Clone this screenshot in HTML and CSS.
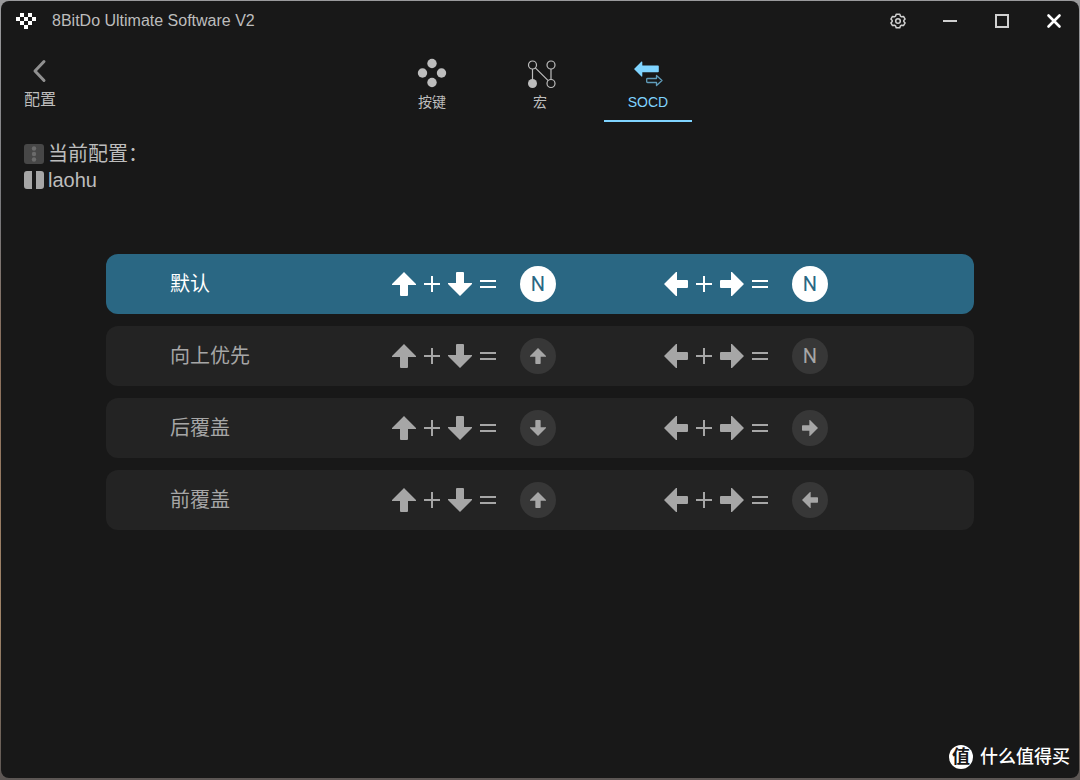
FILE: index.html
```html
<!DOCTYPE html>
<html lang="zh-CN">
<head>
<meta charset="utf-8">
<meta name="viewport" content="width=device-width, initial-scale=1">
<title>8BitDo Ultimate Software V2</title>
<link rel="stylesheet" href="styles.css">
</head>
<body>
<svg class="symbols" aria-hidden="true">
  <symbol id="arrow" viewBox="0 0 24 24"><path d="M12 0 24 12v1h-8v10q0 1-1 1H9q-1 0-1-1V13H0v-1z"/></symbol>
  <symbol id="plus" viewBox="0 0 16 16"><path d="M7 0h2v16H7zM0 7h16v2H0z"/></symbol>
  <symbol id="equals" viewBox="0 0 16 16"><path d="M0 4h16v2H0zM0 10h16v2H0z"/></symbol>
</svg>
<div class="window">
  <header class="titlebar">
    <svg class="logo" viewBox="0 0 20 16" shape-rendering="crispEdges" aria-hidden="true"><path d="M4 0h4v4H4zM12 0h4v4h-4zM0 4h4v4H0zM8 4h4v4H8zM16 4h4v4h-4zM4 8h4v4H4zM12 8h4v4h-4zM8 12h4v4H8z"/></svg>
    <h1 class="title">8BitDo Ultimate Software V2</h1>
    <div class="controls">
      <button type="button" class="control" aria-label="设置"><svg viewBox="0 0 16 16"><path class="line" d="M6.200 1.200h3.600l.6 1.900 1.200.7 1.900-.4 1.600 2.700-1.300 1.400v1l1.300 1.400-1.600 2.700-1.900-.4-1.200.7-.6 1.900H6.200l-.6-1.900-1.200-.7-1.900.4L.9 9.900l1.300-1.400v-1L.9 6.100l1.600-2.700 1.900.4 1.200-.7z"/><circle class="line" cx="8" cy="8" r="2.300"/></svg></button>
      <button type="button" class="control" aria-label="最小化"><svg viewBox="0 0 16 16"><path d="M1 7h14v2H1z"/></svg></button>
      <button type="button" class="control" aria-label="最大化"><svg viewBox="0 0 16 16"><path class="line thick" d="M2 2h12v12H2z"/></svg></button>
      <button type="button" class="control close" aria-label="关闭"><svg viewBox="0 0 16 16"><path class="line heavy" d="m2.500 2.500 11 11m0-11-11 11"/></svg></button>
    </div>
  </header>

  <div class="toolbar">
    <button type="button" class="back">
      <svg viewBox="0 0 24 24" aria-hidden="true"><path d="m16 2.500-9 9.500 9 9.500"/></svg>
      <span>配置</span>
    </button>
    <nav class="tabs">
      <a class="tab" href="#buttons">
        <svg viewBox="0 0 32 32" aria-hidden="true"><g fill="currentColor"><circle cx="16" cy="6.500" r="4.700"/><circle cx="6.500" cy="16" r="4.700"/><circle cx="25.500" cy="16" r="4.700"/><circle cx="16" cy="25.500" r="4.700"/></g></svg>
        <span>按键</span>
      </a>
      <a class="tab" href="#macro">
        <svg viewBox="0 0 32 32" aria-hidden="true"><g fill="none" stroke="currentColor" stroke-width="1.200"><circle cx="8.500" cy="8" r="4"/><circle cx="27" cy="8" r="4"/><circle cx="27" cy="26.500" r="4"/><path d="M8.500 12v11M27 12v10.500M11.300 10.800l12.900 12.900"/></g><circle cx="8.500" cy="26.500" r="4.500" fill="currentColor"/></svg>
        <span>宏</span>
      </a>
      <a class="tab active" href="#socd" aria-current="page">
        <svg viewBox="0 0 32 32" aria-hidden="true"><path fill="currentColor" d="M2 12 9.500 4.500q.8-.4.800.6V8.500H26q.8 0 .8.800v5.200q0 .8-.8.800H10.300v3.700q0 1-.8.600z"/><path fill="none" stroke="currentColor" stroke-opacity=".7" stroke-width="1.300" stroke-linejoin="round" d="M15.500 21.500h9v-3l5.500 5-5.500 5v-3h-9q-.8 0-.8-.8v-2.400q0-.8.800-.8z"/></svg>
        <span>SOCD</span>
      </a>
    </nav>
  </div>

  <section class="profile">
    <div class="profile-line">
      <svg class="badge" viewBox="0 0 20 20" aria-hidden="true"><rect width="20" height="20" rx="3" fill="#474747"/><g fill="#6b6b6b"><circle cx="10" cy="4.500" r="2.200"/><circle cx="10" cy="10" r="2.200"/><circle cx="10" cy="15.500" r="2.200"/></g></svg>
      <span>当前配置：</span>
    </div>
    <div class="profile-line">
      <svg class="badge" viewBox="0 0 20 20" aria-hidden="true"><path fill="#a6a6a6" d="M3 1h5v18H3q-3 0-3-3V4q0-3 3-3zM12 1h5q3 0 3 3v12q0 3-3 3h-5z"/></svg>
      <span>laohu</span>
    </div>
  </section>

  <main class="modes">
    <button type="button" class="mode selected" aria-pressed="true">
      <span class="name">默认</span>
      <span class="rule"><svg class="key"><use href="#arrow"/></svg><svg class="op"><use href="#plus"/></svg><svg class="key down"><use href="#arrow"/></svg><svg class="op"><use href="#equals"/></svg><span class="result">N</span></span>
      <span class="rule"><svg class="key left"><use href="#arrow"/></svg><svg class="op"><use href="#plus"/></svg><svg class="key right"><use href="#arrow"/></svg><svg class="op"><use href="#equals"/></svg><span class="result">N</span></span>
    </button>
    <button type="button" class="mode" aria-pressed="false">
      <span class="name">向上优先</span>
      <span class="rule"><svg class="key"><use href="#arrow"/></svg><svg class="op"><use href="#plus"/></svg><svg class="key down"><use href="#arrow"/></svg><svg class="op"><use href="#equals"/></svg><span class="result"><svg class="op"><use href="#arrow"/></svg></span></span>
      <span class="rule"><svg class="key left"><use href="#arrow"/></svg><svg class="op"><use href="#plus"/></svg><svg class="key right"><use href="#arrow"/></svg><svg class="op"><use href="#equals"/></svg><span class="result">N</span></span>
    </button>
    <button type="button" class="mode" aria-pressed="false">
      <span class="name">后覆盖</span>
      <span class="rule"><svg class="key"><use href="#arrow"/></svg><svg class="op"><use href="#plus"/></svg><svg class="key down"><use href="#arrow"/></svg><svg class="op"><use href="#equals"/></svg><span class="result"><svg class="op down"><use href="#arrow"/></svg></span></span>
      <span class="rule"><svg class="key left"><use href="#arrow"/></svg><svg class="op"><use href="#plus"/></svg><svg class="key right"><use href="#arrow"/></svg><svg class="op"><use href="#equals"/></svg><span class="result"><svg class="op right"><use href="#arrow"/></svg></span></span>
    </button>
    <button type="button" class="mode" aria-pressed="false">
      <span class="name">前覆盖</span>
      <span class="rule"><svg class="key"><use href="#arrow"/></svg><svg class="op"><use href="#plus"/></svg><svg class="key down"><use href="#arrow"/></svg><svg class="op"><use href="#equals"/></svg><span class="result"><svg class="op"><use href="#arrow"/></svg></span></span>
      <span class="rule"><svg class="key left"><use href="#arrow"/></svg><svg class="op"><use href="#plus"/></svg><svg class="key right"><use href="#arrow"/></svg><svg class="op"><use href="#equals"/></svg><span class="result"><svg class="op left"><use href="#arrow"/></svg></span></span>
    </button>
  </main>

  <footer class="watermark">
    <span class="seal">值</span>
    <span>什么值得买</span>
  </footer>
</div>
</body>
</html>
```
FILE: styles.css
```css
* {
  box-sizing: border-box;
}

body {
  margin: 0;
  background: linear-gradient(#9a9a9c, #77777a 28%, #8a6f5c 45%, #a08468 80%, #5c5654);
  color: #bdbdbd;
  font-family: "Liberation Sans", "Noto Sans CJK SC", sans-serif;
}

button {
  padding: 0;
  border: 0;
  background: none;
  color: inherit;
  font: inherit;
  cursor: pointer;
}

svg {
  display: block;
  flex: none;
}

.symbols {
  position: absolute;
  width: 0;
  height: 0;
}

.window {
  position: relative;
  z-index: 0;
  display: flex;
  flex-direction: column;
  min-height: 100vh;
}

.window::before {
  content: "";
  position: absolute;
  inset: 1px 1px 2px;
  z-index: -1;
  border-radius: 8px;
  background: #181818;
}

.titlebar {
  display: flex;
  align-items: center;
  gap: 16px;
  height: 42px;
  padding-left: 16px;
}

.logo {
  width: 20px;
  height: 16px;
  fill: #fff;
}

.title {
  flex: 1;
  margin: 0;
  font-size: 16px;
  font-weight: 400;
  line-height: 20px;
}

.controls {
  display: flex;
}

.control {
  display: grid;
  place-items: center;
  width: 52px;
  height: 42px;
  color: #d0d0d0;
}

.control svg {
  width: 16px;
  height: 16px;
  fill: currentColor;
}

.control .line {
  fill: none;
  stroke: currentColor;
  stroke-width: 1.5;
  stroke-linejoin: round;
}

.control .thick {
  stroke-width: 2;
  stroke-linejoin: miter;
}

.control .heavy {
  stroke-width: 2.6;
  stroke-linecap: round;
}

.close {
  color: #fff;
}

.toolbar {
  display: grid;
  grid-template-columns: 1fr auto 1fr;
  align-items: start;
  padding: 15px 24px 0;
}

.back {
  display: flex;
  flex-direction: column;
  gap: 5px;
  justify-self: start;
  padding-top: 2px;
  font-size: 16px;
  line-height: 24px;
}

.back svg {
  align-self: center;
  width: 24px;
  height: 24px;
  fill: none;
  stroke: #909090;
  stroke-width: 3;
  stroke-linecap: round;
  stroke-linejoin: round;
}

.tabs {
  display: flex;
  gap: 20px;
}

.tab {
  display: flex;
  flex-direction: column;
  align-items: center;
  gap: 3px;
  width: 88px;
  height: 65px;
  border-bottom: 2px solid transparent;
  color: inherit;
  font-size: 14px;
  line-height: 20px;
  text-decoration: none;
}

.tab svg {
  width: 32px;
  height: 32px;
}

.active {
  border-color: #7fd4ff;
  color: #7fd4ff;
}

.profile {
  padding: 19px 24px 0;
  font-size: 20px;
  line-height: 26px;
}

.profile-line {
  display: flex;
  align-items: center;
  gap: 4px;
  height: 26px;
}

.badge {
  width: 20px;
  height: 20px;
}

.modes {
  display: flex;
  flex-direction: column;
  gap: 12px;
  margin: 61px 106px;
}

.mode {
  display: grid;
  grid-template-columns: 222fr 272fr 310fr;
  align-items: center;
  height: 60px;
  padding-left: 64px;
  border-radius: 12px;
  background: #232323;
  color: #a6a6a6;
  font-size: 20px;
  line-height: 24px;
  text-align: left;
}

.selected {
  background: #2a6783;
  color: #fff;
}

.rule {
  display: flex;
  align-items: center;
  gap: 8px;
  fill: currentColor;
}

.key {
  width: 24px;
  height: 24px;
}

.op {
  width: 16px;
  height: 16px;
}

.down {
  transform: rotate(180deg);
}

.left {
  transform: rotate(-90deg);
}

.right {
  transform: rotate(90deg);
}

.result {
  display: grid;
  place-items: center;
  width: 36px;
  height: 36px;
  margin-left: 16px;
  border-radius: 50%;
  background: #373737;
  font-family: Roboto, sans-serif;
}

.selected .result {
  background: #fff;
  color: #2a6783;
}

.watermark {
  display: flex;
  align-items: center;
  justify-content: flex-end;
  gap: 7px;
  margin-top: auto;
  padding: 0 10px 11px;
  color: #fff;
  font-size: 18px;
  font-weight: 500;
  line-height: 24px;
}

.seal {
  display: grid;
  place-items: center;
  width: 24px;
  height: 24px;
  border-radius: 50%;
  background: #fff;
  color: #181818;
  font-weight: 700;
}
```
